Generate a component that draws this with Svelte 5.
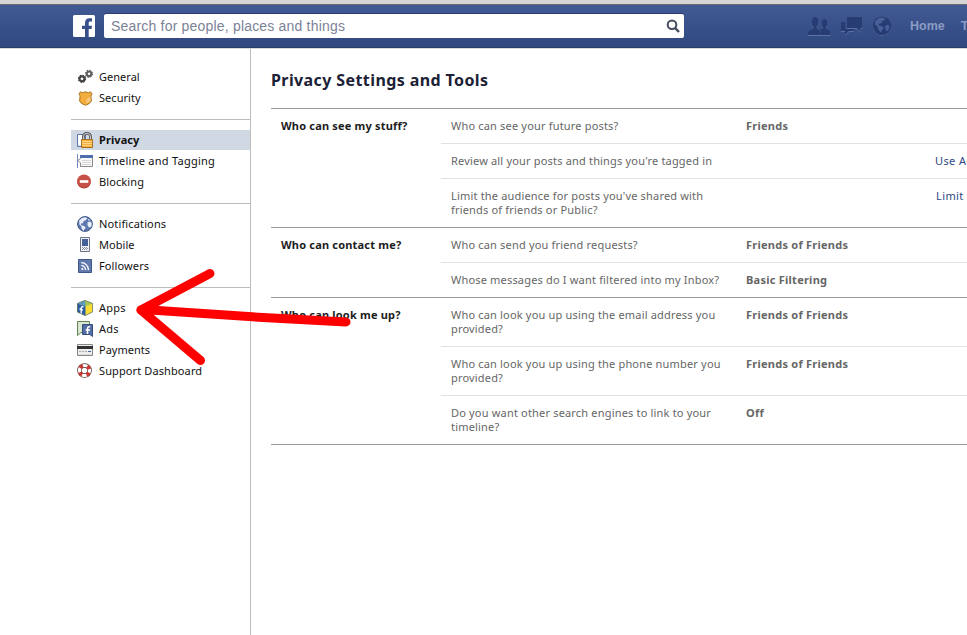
<script>
  const groups = [
    [{ id: 'general', label: 'General', ls: 0.02 }, { id: 'security', label: 'Security', ls: 0.05 }],
    [
      { id: 'privacy', label: 'Privacy', active: true, ls: 0.08 },
      { id: 'timeline', label: 'Timeline and Tagging', ls: 0.26 },
      { id: 'blocking', label: 'Blocking', ls: 0.1 }
    ],
    [
      { id: 'notifications', label: 'Notifications', ls: 0.14 },
      { id: 'mobile', label: 'Mobile', ls: 0.05 },
      { id: 'followers', label: 'Followers', ls: 0.12 }
    ],
    [
      { id: 'apps', label: 'Apps', ls: 0.2 },
      { id: 'ads', label: 'Ads', ls: 0.2 },
      { id: 'payments', label: 'Payments', ls: 0 },
      { id: 'support', label: 'Support Dashboard', ls: 0.11 }
    ]
  ];

  const sections = [
    {
      title: 'Who can see my stuff?',
      rows: [
        { q: ['Who can see your future posts?'], value: 'Friends' },
        { q: ["Review all your posts and things you're tagged in"], link: 'Use Activity Log' },
        { q: ["Limit the audience for posts you've shared with", 'friends of friends or Public?'], link: 'Limit Past Posts', shift: 1 }
      ]
    },
    {
      title: 'Who can contact me?',
      rows: [
        { q: ['Who can send you friend requests?'], value: 'Friends of Friends' },
        { q: ['Whose messages do I want filtered into my Inbox?'], value: 'Basic Filtering' }
      ]
    },
    {
      title: 'Who can look me up?',
      rows: [
        { q: ['Who can look you up using the email address you', 'provided?'], value: 'Friends of Friends' },
        { q: ['Who can look you up using the phone number you', 'provided?'], value: 'Friends of Friends' },
        { q: ['Do you want other search engines to link to your', 'timeline?'], value: 'Off' }
      ]
    }
  ];
</script>

{#snippet icon(id)}
  <svg class="icon" width="16" height="16" viewBox="0 0 16 16">
    {#if id === 'general'}
      <circle cx="5" cy="9.8" r="2.5" fill="none" stroke="#444" stroke-width="2.2" />
      <circle cx="5" cy="9.8" r="3.6" fill="none" stroke="#444" stroke-width="1.2" stroke-dasharray="1.5 1.33" />
      <circle cx="12" cy="4.8" r="2.3" fill="none" stroke="#606060" stroke-width="2.1" />
      <circle cx="12" cy="4.8" r="3.5" fill="none" stroke="#606060" stroke-width="1.2" stroke-dasharray="1.4 1.35" />
    {:else if id === 'security'}
      <path d="M3.5 1.8 5.5 2.8 8.5 1.8 11.5 2.8 13.5 1.8 15 3.8 13.9 6 14.4 11 12.5 13.4 8.5 15.2 4.5 13.4 2.6 11 3.1 6 2 3.8Z" fill="#f3ae3d" stroke="#a87420" stroke-width="1" />
      <path d="M9.5 9.5 13.3 6.5 13.6 10.9 9.5 13.5Z" fill="#f8c985" />
    {:else if id === 'privacy'}
      <path d="M.5 2.5h8v12h-8z" fill="#fff" stroke="#5b76b0" /><path d="M1 13h4v1H1z" fill="#dfe4ef" />
      <path d="M6.4 8V4.9a3.6 3.6 0 0 1 7.2 0V8" fill="none" stroke="#555" stroke-width="2.8" />
      <path d="M6.4 8V4.9a3.6 3.6 0 0 1 7.2 0V8" fill="none" stroke="#d0d0d0" stroke-width="1" />
      <path d="M4.5 7.5h11v8h-11z" fill="#f5ad3b" stroke="#a77021" />
      <path d="M5 9.5h10M5 11.5h10M5 13.5h10" stroke="#ffd487" />
    {:else if id === 'timeline'}
      <path d="M.5 1v14" stroke="#7187b9" /><path d="M3.5 2.5h12v11h-12V10L1 7.5l2.5-2z" fill="#f8f8f8" stroke="#8a8a8a" />
      <path d="M3 2h13v3H3z" fill="#4f6cae" /><path d="M5 7.5h9M5 9.5h9M5 11.5h9" stroke="#d8d8d8" />
    {:else if id === 'blocking'}
      <circle cx="7" cy="7.5" r="7" fill="#c75148" /><path d="M.8 9a6.5 6.5 0 0 0 12.4 0" fill="none" stroke="#b0433b" /><path d="M2.8 6.2h8.5v2.6H2.8z" fill="#fff" />
    {:else if id === 'notifications'}
      <circle cx="8" cy="8" r="7.4" fill="#5c78ae" stroke="#3d5688" />
      <path d="M2.2 4.6 5 2l3.5-.8 1.8 1.1-1.6 1.9-2 .7-.8 2.3-2.1.4.3 1.7 3 .6 1.7 1.8-1.5 1.6-.6 1.8-2.1-2.3-.2-2.4-2-1.8zM10.5 6.2l2.8-.8 1.6 2-.6 3.4-2.2.6-1.5-2zM11 3l1.5.4.4 1-1.6.1z" fill="#e9effa" />
    {:else if id === 'mobile'}
      <path d="M3.5.5h9v14h-9z" fill="#f1f2f5" stroke="#6c7486" />
      <path d="M5 2h6v7H5z" fill="#455f99" /><path d="M5 10.5h6M5 12.5h6" stroke="#8490a8" stroke-dasharray="1 1" /><path d="M6 11.5h5" stroke="#8490a8" stroke-dasharray="1 1" />
    {:else if id === 'followers'}
      <path d="M1.5 1.5h13v13h-13z" fill="#627aab" stroke="#3f5689" />
      <circle cx="5.4" cy="11" r="1.1" fill="#fff" /><path d="M4.3 7.6a4.2 4.2 0 0 1 4.3 4.4M4.3 4.7a7.2 7.2 0 0 1 7.2 7.3" fill="none" stroke="#fff" stroke-width="1.3" />
    {:else if id === 'apps'}
      <path d="M8 .4 15.6 3.4V12L8 15.6.4 12V3.4z" fill="#fadc34" />
      <path d="M8 .4 15.6 3.4 8.5 6.5 3.5 2.2z" fill="#a5c556" />
      <path d="M8 .4.4 3.4l8.1 3.1z" fill="#5c9ac4" />
      <path d="M.4 3.4 8.5 6.5v9L.4 12z" fill="#2b5ca6" />
      <path d="M8 .4 15.6 3.4V12L8 15.6.4 12V3.4z" fill="none" stroke="#4c6658" stroke-width=".7" />
      <path d="M6.4 7c-1.6-.6-2.2 0-2.2 1.4v5.2M2.5 9l3.5 1.1" fill="none" stroke="#fff" stroke-width="1.4" />
    {:else if id === 'ads'}
      <path d="M.5.5h12v11H4L.5 14.5z" fill="#dbe8d1" stroke="#5f8454" />
      <path d="M5.5 3.5h10v12l-2.5-2H5.5z" fill="#526ca5" stroke="#364d80" />
      <path d="M13.2 5.8c-2-.3-2.7.4-2.7 2V13M8.6 9H13" fill="none" stroke="#fff" stroke-width="1.6" />
    {:else if id === 'payments'}
      <path d="M.5 2.5h15v11H.5z" fill="#eee" stroke="#888" /><path d="M0 4h16v3H0z" fill="#333" /><path d="M2 9.5h9" stroke="#aaa" stroke-dasharray="2 1" /><path d="M11 9.5h3" stroke="#4765a5" /><path d="M1 12.5h14" stroke="#ddd" />
    {:else if id === 'support'}
      <circle cx="7.5" cy="7.5" r="5" fill="none" stroke="#553333" stroke-width="4.6" />
      <circle cx="7.5" cy="7.5" r="5" fill="none" stroke="#fff" stroke-width="3.2" />
      <circle cx="7.5" cy="7.5" r="5" fill="none" stroke="#c83831" stroke-width="3.8" stroke-dasharray="3.4 4.454" stroke-dashoffset="-2.23" />
    {/if}
  </svg>
{/snippet}

<div class="page">
  <div class="chrome"></div>
  <header>
    <svg class="logo" width="22" height="22" viewBox="0 0 22 22">
      <rect width="22" height="22" rx="1.5" fill="#fff" />
      <path d="M12 22v-8H9v-3.3h3V8.2C12 4.8 13.5 3.2 16.6 3.2H19v3.4h-1.5c-1.4 0-1.8.6-1.8 1.9v2.2H19l-.5 3.3h-2.8v8z" fill="#37508b" />
    </svg>
    <div class="search">
      <span>Search for people, places and things</span>
      <svg width="14" height="14" viewBox="0 0 14 14"><circle cx="6" cy="5.8" r="4.3" fill="none" stroke="#444b5d" stroke-width="2" /><path d="m9.2 9.2 3.8 3.8" stroke="#444b5d" stroke-width="2.4" /></svg>
    </div>
    <div class="jewels">
      <svg width="23" height="20" viewBox="0 0 23 20">
        {#each ['#5a72a8', '#263c72'] as color, i}
          <g fill={color} transform="translate(0 {1 - i})">
            <path d="M13 19v-3.4l-1-1.3 2.8-1.6v-1.5c-1.9-2.1-2-7.7 1.7-8.2 3.7.5 3.6 6.1 1.7 8.2v1.7l4.3 2.7V19z" />
            <path d="M0 19v-3.2l5.4-3v-2C3 8.500 2.600 1.800 7 1.000c4.400.8 4 7.500 1.700 9.800v2l4 3V19z" />
          </g>
        {/each}
      </svg>
      <svg width="21" height="20" viewBox="0 0 21 20">
        {#each ['#5a72a8', '#263c72'] as color, i}
          <g fill={color} transform="translate(0 {1 - i})">
            <path d="M0 6h4.500v7H13v2H8l-4 4v-4H0z" />
            <path d="M6 1h15v11h-1.500v4l-4-4H6z" />
          </g>
        {/each}
      </svg>
      <svg width="20" height="20" viewBox="0 0 20 20">
        <circle cx="10" cy="10.500" r="9.300" fill="#5a72a8" /><circle cx="10" cy="9.800" r="9.300" fill="#263c72" />
        <path d="M3.2 5.2 6.800 2l4.300-.5 2.700 1.700-3.400 1.800-1 2.200-2.500.6-.6 1.800 3.100.3 2.500 2-2 2.300-.7 2.400-2.600-2.700-.7-3-2.800-2.300zM13 10.200l2.600-1.600 2 1.500-1.200 4-2.200 1.200z" fill="#48609a" />
      </svg>
    </div>
    <nav><span>Home</span><span>Tools</span></nav>
  </header>

  <div class="body">
    <aside>
      {#each groups as group}
        <ul>
          {#each group as item}
            <li class:active={item.active}>
              {@render icon(item.id)}
              <span style="letter-spacing: {item.ls}px">{item.label}</span>
            </li>
          {/each}
        </ul>
      {/each}
    </aside>
    <main>
      <h1>Privacy Settings and Tools</h1>
      {#each sections as section}
        <section>
          <h2>{section.title}</h2>
          <div class="rows">
            {#each section.rows as row}
              <div class="row">
                <div class="question">
                  {#each row.q as line}<div>{line}</div>{/each}
                </div>
                <div class="value">{row.value ?? ''}</div>
                <div class="link" class:shift={row.shift}>{row.link ?? ''}</div>
              </div>
            {/each}
          </div>
        </section>
      {/each}
    </main>
  </div>

  <svg class="arrow" width="967" height="635" viewBox="0 0 967 635">
    <path d="M210 273.500 141 310 200.500 360.500" />
    <path d="M141 310 158 310.500 263 317.500 346 322" />
  </svg>
</div>

<style>
  .page {
    position: relative;
    width: 967px;
    height: 635px;
    overflow: hidden;
    display: flex;
    flex-direction: column;
    background: #fff;
    font: 11px/14px 'Noto Sans', 'Open Sans', sans-serif;
    color: #1c1c1c;
    white-space: nowrap;
  }
  .chrome { height: 4px; flex: none; background: #d5d5d5; border-bottom: 1px solid #6b6b6b; }
  header {
    height: 43px;
    flex: none;
    box-sizing: border-box;
    display: flex;
    align-items: flex-start;
    padding: 9px 0 0 73px;
    background: linear-gradient(#415a93, #2f4880);
    border-bottom: 1px solid #293e6c;
  }
  .logo { margin-top: 1px; flex: none; }
  .search {
    width: 580px;
    height: 24px;
    flex: none;
    box-sizing: border-box;
    margin-left: 9px;
    padding: 0 4px 0 7px;
    display: flex;
    align-items: center;
    justify-content: space-between;
    background: #fff;
    border-radius: 2px;
    box-shadow: 0 -1px 0 #263b70;
    font: 14px/24px 'Liberation Sans', Arial, sans-serif;
    letter-spacing: 0.19px;
    color: #7b8296;
  }
  .jewels { display: flex; gap: 10px; margin: 2px 0 0 124px; flex: none; }
  nav {
    display: flex;
    gap: 16px;
    margin-left: 18px;
    font: bold 12.5px/24px 'Liberation Sans', Arial, sans-serif;
    color: #8b9cc4;
  }
  .body { flex: 1; display: flex; border-top: 1px solid #d6d8de; }
  aside {
    width: 179px;
    flex: none;
    margin-left: 71px;
    padding-top: 8px;
    border-right: 1px solid #bcbcbc;
  }
  ul { list-style: none; margin: 0; padding: 10px 0; }
  ul + ul { border-top: 1px solid #bcbcbc; }
  li { display: flex; align-items: center; height: 20px; margin-bottom: 1px; padding-left: 6px; color: #111; }
  .active { background: #d0d8e4; font-weight: 700; }
  .icon { flex: none; margin-right: 6px; }
  main { width: 760px; flex: none; margin-left: 20px; }
  h1 { margin: 0; height: 59px; box-sizing: border-box; padding-top: 21px; font-size: 16px; line-height: 20px; letter-spacing: 0.4px; color: #1c2135; }
  section { display: flex; border-top: 1px solid #999; }
  section:last-child { border-bottom: 1px solid #999; }
  h2 { width: 160px; margin: 0; padding: 10px 0 0 10px; font-size: 11px; line-height: 14px; letter-spacing: 0.19px; }
  .rows { flex: 1; }
  .row { display: flex; padding: 10px 0 10px 10px; color: #666; }
  .row + .row { border-top: 1px solid #e1e1e1; }
  .question { width: 295px; letter-spacing: 0.18px; }
  .value { width: 189px; font-weight: 700; letter-spacing: 0.25px; }
  .link { color: #2f4784; letter-spacing: 0.4px; }
  .shift { padding-left: 1px; }
  .arrow { position: absolute; left: 0; top: 0; fill: none; stroke: #f00; stroke-width: 9; stroke-linecap: round; stroke-linejoin: round; }
</style>
